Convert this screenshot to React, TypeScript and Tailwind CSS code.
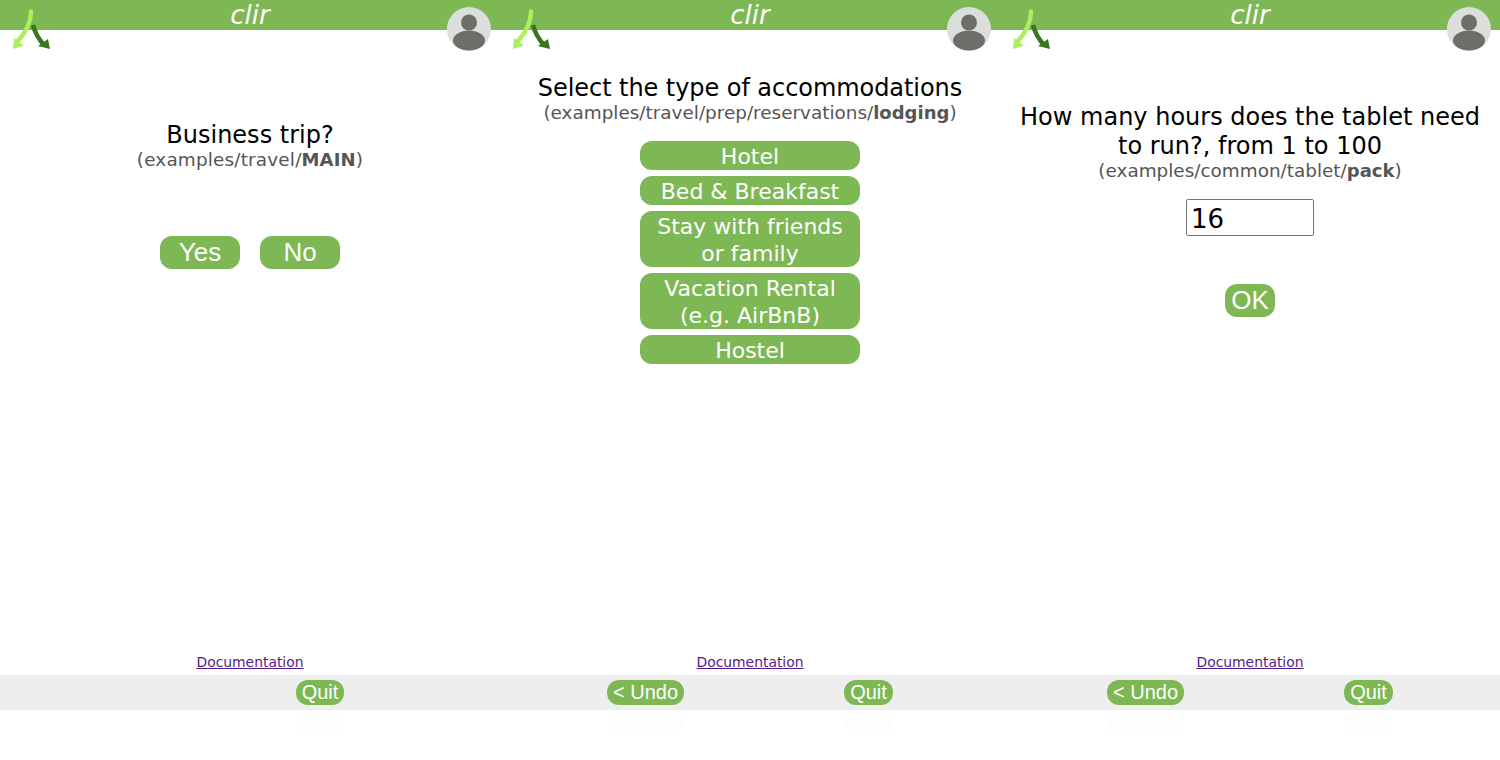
const GREEN = 'bg-[#7db855]'

function Logo() {
  return (
    <svg width="40" height="42" viewBox="0 0 40 42" className="absolute left-[11px] top-[8px]">
      <path d="M20 3.5 C20 15 15 24 7 33" fill="none" stroke="#aaf05f" strokeWidth="4.5" strokeLinecap="round" />
      <path d="M2 41 L3 30 L13 37.5 Z" fill="#aaf05f" />
      <path d="M22 17 C24 25 27 30 32 36" fill="none" stroke="#38761d" strokeWidth="4.5" />
      <path d="M39 41 L37 31 L27 38 Z" fill="#38761d" />
    </svg>
  )
}

function Avatar() {
  return (
    <svg width="44" height="44" viewBox="0 0 44 44" className="absolute left-[447px] top-[7px]">
      <circle cx="22" cy="22" r="22" fill="#dbdeda" />
      <circle cx="22" cy="15.5" r="8" fill="#6d6e6a" />
      <ellipse cx="22" cy="33.5" rx="16" ry="10" fill="#6d6e6a" />
    </svg>
  )
}

function Choice({ children }: { children: React.ReactNode }) {
  return (
    <button className={`block w-[220px] rounded-[12px] ${GREEN} px-2 pt-[2px] text-[22px] leading-[27px] text-white`}>
      {children}
    </button>
  )
}

function Pill({ label, className }: { label: string; className: string }) {
  return (
    <button className={`rounded-[12px] ${GREEN} font-['Liberation_Sans',sans-serif] leading-[25px] text-white ${className}`}>
      {label}
    </button>
  )
}

function Ghost({ label, className }: { label: string; className: string }) {
  return (
    <div className={`h-[23px] rounded-[12px] bg-[#fdfdfd] text-center font-['Liberation_Sans',sans-serif] text-[20px] leading-[22px] text-white ${className}`}>
      {label}
    </div>
  )
}

function Title({ text, path, file, top, titleClass = '', pathClass = '' }: { text: React.ReactNode; path: string; file: string; top: string; titleClass?: string; pathClass?: string }) {
  return (
    <div className={`text-center ${top}`}>
      <div className={`text-[24px] leading-[29px] text-black ${titleClass}`}>{text}</div>
      <div className={`-mt-[2px] text-[18.4px] leading-[23px] text-[#555] ${pathClass}`}>
        ({path}/<b className="text-[18px]">{file}</b>)
      </div>
    </div>
  )
}

function Pane({ children, quitClass, undo }: { children: React.ReactNode; quitClass: string; undo: boolean }) {
  return (
    <div className="relative flex h-[760px] w-[500px] flex-col font-['DejaVu_Sans',sans-serif]">
      <div className={`h-[30px] shrink-0 ${GREEN} text-center text-[26px] italic leading-[30px] text-white`}>
        clir
      </div>
      <Logo />
      <Avatar />
      <div className="flex h-[615px] shrink-0 flex-col items-center">{children}</div>
      <div className="h-[30px] shrink-0 pt-[9px] text-center text-[13.9px] leading-[17px]">
        <a href="#docs" className="text-[#551a8b] underline">Documentation</a>
      </div>
      <div className="flex h-[35px] shrink-0 items-center bg-[#eeeeee] pl-[107px]">
        {undo && <Pill label="< Undo" className="w-[77px] text-[20px]" />}
        <Pill label="Quit" className={`text-[20px] ${quitClass}`} />
      </div>
      <div className="flex h-[28px] shrink-0 pl-[107px]">
        {undo && <Ghost label="< Undo" className="w-[77px]" />}
        <Ghost label="Quit" className={quitClass} />
      </div>
    </div>
  )
}

export default function App() {
  return (
    <div className="flex w-[1500px] overflow-hidden bg-white">
      <Pane undo={false} quitClass="ml-[189px] w-[48px]">
        <Title top="mt-[91px]" text="Business trip?" path="examples/travel" file="MAIN" pathClass="tracking-[0.18px]" />
        <div className="mt-[65px] flex gap-5">
          <Pill label="Yes" className="w-20 py-1 text-[26px]" />
          <Pill label="No" className="w-20 py-1 text-[26px]" />
        </div>
      </Pane>
      <Pane undo quitClass="ml-[160px] w-[49px]">
        <Title top="mt-[44px]" text="Select the type of accommodations" path="examples/travel/prep/reservations" file="lodging" titleClass="tracking-[-0.06px]" />
        <div className="mt-[17px] flex flex-col gap-[6px]">
          <Choice>Hotel</Choice>
          <Choice>Bed &amp; Breakfast</Choice>
          <Choice>Stay with friends<br />or family</Choice>
          <Choice>Vacation Rental<br />(e.g. AirBnB)</Choice>
          <Choice>Hostel</Choice>
        </div>
      </Pane>
      <Pane undo quitClass="ml-[160px] w-[49px]">
        <Title top="mt-[73px]" text={<>How many hours does the tablet need<br />to run?, from 1 to 100</>} path="examples/common/tablet" file="pack" />
        <input
          defaultValue="16"
          className="mt-[17px] h-[37px] w-[128px] rounded-[2px] border border-[#767676] px-1 pt-[4px] text-[26px] text-black"
        />
        <Pill label="OK" className="mt-[48px] w-[50px] py-1 text-[26px]" />
      </Pane>
    </div>
  )
}
